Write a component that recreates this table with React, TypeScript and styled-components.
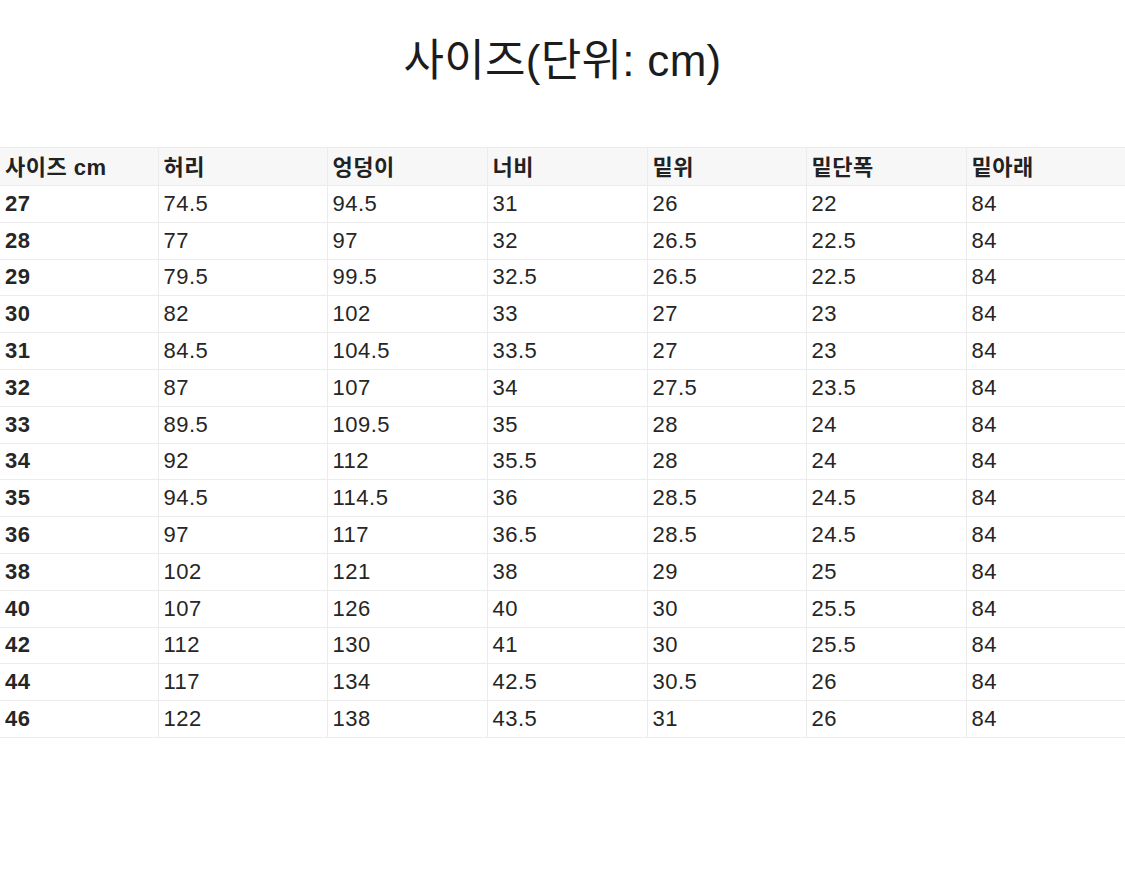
import React from 'react';
import styled, { createGlobalStyle } from 'styled-components';

const GlobalStyle = createGlobalStyle`
	html, body {
		margin: 0;
		padding: 0;
		background: #ffffff;
	}
	body {
		font-family: 'Liberation Sans', 'Noto Sans CJK KR', sans-serif;
		color: #222222;
	}
`;

const COLUMNS = ['사이즈 cm', '허리', '엉덩이', '너비', '밑위', '밑단폭', '밑아래'];
const WIDTHS = [158, 169, 160, 160, 159, 160, 159];

const ROWS: string[][] = [
	['27', '74.5', '94.5', '31', '26', '22', '84'],
	['28', '77', '97', '32', '26.5', '22.5', '84'],
	['29', '79.5', '99.5', '32.5', '26.5', '22.5', '84'],
	['30', '82', '102', '33', '27', '23', '84'],
	['31', '84.5', '104.5', '33.5', '27', '23', '84'],
	['32', '87', '107', '34', '27.5', '23.5', '84'],
	['33', '89.5', '109.5', '35', '28', '24', '84'],
	['34', '92', '112', '35.5', '28', '24', '84'],
	['35', '94.5', '114.5', '36', '28.5', '24.5', '84'],
	['36', '97', '117', '36.5', '28.5', '24.5', '84'],
	['38', '102', '121', '38', '29', '25', '84'],
	['40', '107', '126', '40', '30', '25.5', '84'],
	['42', '112', '130', '41', '30', '25.5', '84'],
	['44', '117', '134', '42.5', '30.5', '26', '84'],
	['46', '122', '138', '43.5', '31', '26', '84'],
];

const App = () => {
	return (
		<Page>
			<GlobalStyle />
			<Title>사이즈(단위: cm)</Title>
			<SizeTable>
				<colgroup>
					{WIDTHS.map((w, i) => (
						<col key={`col-${i}`} style={{ width: w }} />
					))}
				</colgroup>
				<thead>
					<tr>
						{COLUMNS.map(name => (
							<HeadCell key={name}>{name}</HeadCell>
						))}
					</tr>
				</thead>
				<tbody>
					{ROWS.map(row => (
						<tr key={row[0]}>
							{row.map((value, i) => (
								<Cell key={`${row[0]}-${i}`} $strong={i === 0}>
									{value}
								</Cell>
							))}
						</tr>
					))}
				</tbody>
			</SizeTable>
		</Page>
	);
};

const Page = styled.div`
	width: 1125px;
	height: 878px;
	display: flex;
	flex-direction: column;
	align-items: stretch;
	overflow: hidden;
`;

const Title = styled.h1`
	margin: 33px 0 0 0;
	height: 55px;
	text-align: center;
	font-size: 44px;
	letter-spacing: 0.3px;
	line-height: 55px;
	font-weight: 400;
	color: #1c1c1c;
	font-family: 'Liberation Sans', 'Noto Sans CJK KR', sans-serif;
`;

const SizeTable = styled.table`
	margin-top: 59px;
	width: 1125px;
	table-layout: fixed;
	border-collapse: collapse;
	font-size: 22px;
	letter-spacing: 0.5px;
`;

const HeadCell = styled.th`
	height: 33px;
	padding: 0 0 4px 5px;
	background: #f7f7f7;
	border-top: 1px solid #ececec;
	border-bottom: 1px solid #ececec;
	border-left: 1px solid #ececec;
	text-align: left;
	font-weight: 700;
	color: #222222;
	&:first-child {
		border-left: none;
	}
`;

const Cell = styled.td<{ $strong?: boolean }>`
	height: 35.8px;
	padding: 0 0 0 5px;
	border-bottom: 1px solid #ececec;
	border-left: 1px solid #ececec;
	text-align: left;
	font-weight: ${props => (props.$strong ? 700 : 400)};
	color: #262626;
	&:first-child {
		border-left: none;
	}
`;

export default App;
